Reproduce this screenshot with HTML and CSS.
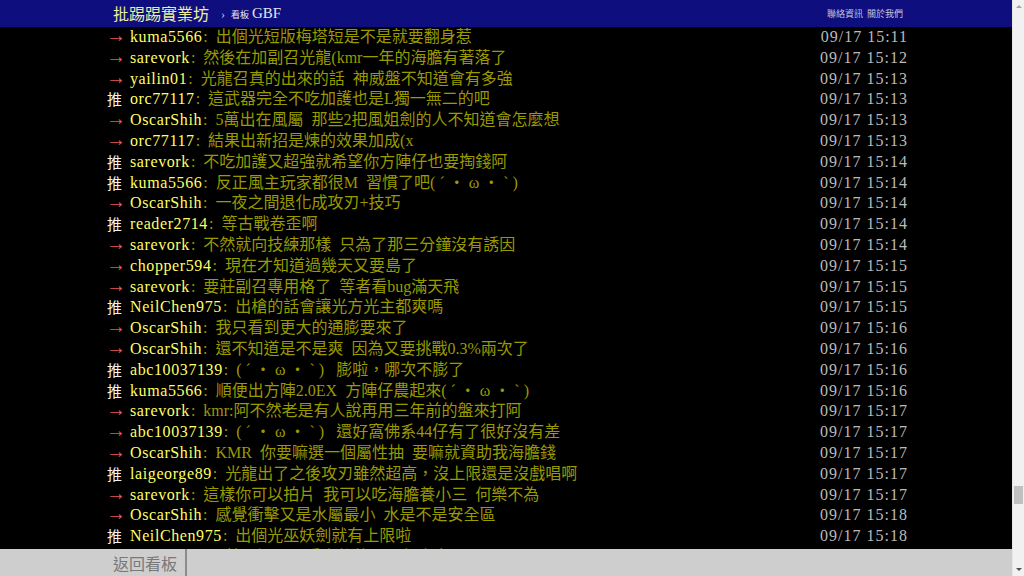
FILE: index.html
```html
<!DOCTYPE html>
<html lang="zh-Hant">
    <head>
        <meta charset="UTF-8">
        <meta name="viewport" content="width=device-width, initial-scale=1.0">
        <title>[閒聊] 光龍召 - 看板 GBF - 批踢踢實業坊</title>

        <!-- CSS -->
        <link rel="stylesheet" href="styles.css">
    </head>
    <body>
        <div class="window">
            <div class="page">
                <header class="topbar">
                    <div class="topbar-inner">
                        <a href="#" class="logo">批踢踢實業坊</a>
                        <span class="sep">›</span>
                        <a href="#" class="board"><span class="board-label">看板</span> GBF</a>
                        <div class="topbar-links">
                            <a href="#">聯絡資訊</a>
                            <a href="#">關於我們</a>
                        </div>
                    </div>
                </header>

                <main class="main">
                    <div class="bbs-screen">
                        <div class="push"><span class="push-tag arrow">→</span><span class="push-userid">kuma5566</span><span class="push-content">: 出個光短版梅塔短是不是就要翻身惹</span><span class="push-ipdatetime">09/17 15:11</span></div>
                        <div class="push"><span class="push-tag arrow">→</span><span class="push-userid">sarevork</span><span class="push-content">: 然後在加副召光龍(kmr一年的海膽有著落了</span><span class="push-ipdatetime">09/17 15:12</span></div>
                        <div class="push"><span class="push-tag arrow">→</span><span class="push-userid">yailin01</span><span class="push-content">: 光龍召真的出來的話 神威盤不知道會有多強</span><span class="push-ipdatetime">09/17 15:13</span></div>
                        <div class="push"><span class="push-tag">推</span><span class="push-userid">orc77117</span><span class="push-content">: 這武器完全不吃加護也是L獨一無二的吧</span><span class="push-ipdatetime">09/17 15:13</span></div>
                        <div class="push"><span class="push-tag arrow">→</span><span class="push-userid">OscarShih</span><span class="push-content">: 5萬出在風屬 那些2把風姐劍的人不知道會怎麼想</span><span class="push-ipdatetime">09/17 15:13</span></div>
                        <div class="push"><span class="push-tag arrow">→</span><span class="push-userid">orc77117</span><span class="push-content">: 結果出新招是煉的效果加成(x</span><span class="push-ipdatetime">09/17 15:13</span></div>
                        <div class="push"><span class="push-tag">推</span><span class="push-userid">sarevork</span><span class="push-content">: 不吃加護又超強就希望你方陣仔也要掏錢阿</span><span class="push-ipdatetime">09/17 15:14</span></div>
                        <div class="push"><span class="push-tag">推</span><span class="push-userid">kuma5566</span><span class="push-content">: 反正風主玩家都很M 習慣了吧<span class="kao">(´・ω・`)</span></span><span class="push-ipdatetime">09/17 15:14</span></div>
                        <div class="push"><span class="push-tag arrow">→</span><span class="push-userid">OscarShih</span><span class="push-content">: 一夜之間退化成攻刃+技巧</span><span class="push-ipdatetime">09/17 15:14</span></div>
                        <div class="push"><span class="push-tag">推</span><span class="push-userid">reader2714</span><span class="push-content">: 等古戰卷歪啊</span><span class="push-ipdatetime">09/17 15:14</span></div>
                        <div class="push"><span class="push-tag arrow">→</span><span class="push-userid">sarevork</span><span class="push-content">: 不然就向技練那樣 只為了那三分鐘沒有誘因</span><span class="push-ipdatetime">09/17 15:14</span></div>
                        <div class="push"><span class="push-tag arrow">→</span><span class="push-userid">chopper594</span><span class="push-content">: 現在才知道過幾天又要島了</span><span class="push-ipdatetime">09/17 15:15</span></div>
                        <div class="push"><span class="push-tag arrow">→</span><span class="push-userid">sarevork</span><span class="push-content">: 要莊副召專用格了 等者看bug滿天飛</span><span class="push-ipdatetime">09/17 15:15</span></div>
                        <div class="push"><span class="push-tag">推</span><span class="push-userid">NeilChen975</span><span class="push-content">: 出槍的話會讓光方光主都爽嗎</span><span class="push-ipdatetime">09/17 15:15</span></div>
                        <div class="push"><span class="push-tag arrow">→</span><span class="push-userid">OscarShih</span><span class="push-content">: 我只看到更大的通膨要來了</span><span class="push-ipdatetime">09/17 15:16</span></div>
                        <div class="push"><span class="push-tag arrow">→</span><span class="push-userid">OscarShih</span><span class="push-content">: 還不知道是不是爽 因為又要挑戰0.3%兩次了</span><span class="push-ipdatetime">09/17 15:16</span></div>
                        <div class="push"><span class="push-tag">推</span><span class="push-userid">abc10037139</span><span class="push-content">: <span class="kao">(´・ω・`)</span> 膨啦，哪次不膨了</span><span class="push-ipdatetime">09/17 15:16</span></div>
                        <div class="push"><span class="push-tag">推</span><span class="push-userid">kuma5566</span><span class="push-content">: 順便出方陣2.0EX 方陣仔農起來<span class="kao">(´・ω・`)</span></span><span class="push-ipdatetime">09/17 15:16</span></div>
                        <div class="push"><span class="push-tag arrow">→</span><span class="push-userid">sarevork</span><span class="push-content">: kmr:阿不然老是有人說再用三年前的盤來打阿</span><span class="push-ipdatetime">09/17 15:17</span></div>
                        <div class="push"><span class="push-tag arrow">→</span><span class="push-userid">abc10037139</span><span class="push-content">: <span class="kao">(´・ω・`)</span> 還好窩佛系44仔有了很好沒有差</span><span class="push-ipdatetime">09/17 15:17</span></div>
                        <div class="push"><span class="push-tag arrow">→</span><span class="push-userid">OscarShih</span><span class="push-content">: KMR 你要嘛選一個屬性抽 要嘛就資助我海膽錢</span><span class="push-ipdatetime">09/17 15:17</span></div>
                        <div class="push"><span class="push-tag">推</span><span class="push-userid">laigeorge89</span><span class="push-content">: 光龍出了之後攻刃雖然超高，沒上限還是沒戲唱啊</span><span class="push-ipdatetime">09/17 15:17</span></div>
                        <div class="push"><span class="push-tag arrow">→</span><span class="push-userid">sarevork</span><span class="push-content">: 這樣你可以拍片 我可以吃海膽養小三 何樂不為</span><span class="push-ipdatetime">09/17 15:17</span></div>
                        <div class="push"><span class="push-tag arrow">→</span><span class="push-userid">OscarShih</span><span class="push-content">: 感覺衝擊又是水屬最小 水是不是安全區</span><span class="push-ipdatetime">09/17 15:18</span></div>
                        <div class="push"><span class="push-tag">推</span><span class="push-userid">NeilChen975</span><span class="push-content">: 出個光巫妖劍就有上限啦</span><span class="push-ipdatetime">09/17 15:18</span></div>
                        <div class="push"><span class="push-tag">推</span><span class="push-userid">laigeorge89</span><span class="push-content">: 結果還是要看之後的石頭怎麼出</span><span class="push-ipdatetime">09/17 15:18</span></div>
                    </div>
                </main>

                <nav class="action-bar">
                    <div class="action-inner">
                        <a href="#" class="btn-back">返回看板</a>
                    </div>
                </nav>
            </div>

            <!-- scrollbar -->
            <div class="scrollbar">
                <div class="sb-arrow sb-up"></div>
                <div class="sb-track">
                    <div class="sb-thumb"></div>
                </div>
                <div class="sb-arrow sb-down"></div>
            </div>
        </div>
    </body>
</html>
```

FILE: styles.css
```css
    /* base */
    *{
        margin: 0;
        padding: 0;
        box-sizing: border-box;
    }

    body{
        background: #000;
        font-family: "Liberation Serif", "Noto Sans CJK TC", serif;
        overflow: hidden;
    }

    a{
        text-decoration: none;
    }

    .window{
        display: flex;
        width: 1024px;
        height: 576px;
    }

    .page{
        display: flex;
        flex-direction: column;
        width: 1012px;
        height: 576px;
    }

    /* top bar */
    .topbar{
        background: #0e0e7e;
        height: 27px;
        flex-shrink: 0;
    }

    .topbar-inner{
        display: flex;
        align-items: center;
        width: 800px;
        height: 100%;
        margin: 0 auto;
        padding: 0 3px 1px 7px;
    }

    .logo{
        color: #eeeea0;
        font-family: "Noto Sans CJK TC", sans-serif;
        font-size: 16px;
        line-height: 1;
    }

    .sep{
        color: #c8c8dc;
        font-size: 12px;
        margin: 2px 6px 0 12px;
    }

    .board{
        color: #e6e6f0;
        font-size: 15px;
        display: flex;
        align-items: baseline;
    }

    .board-label{
        font-family: "Noto Sans CJK TC", sans-serif;
        font-size: 9px;
        margin-right: 3px;
    }

    .topbar-links{
        margin-left: auto;
        display: flex;
        gap: 4px;
        padding-top: 1px;
    }

    .topbar-links a{
        color: #c4c4dc;
        font-family: "Noto Sans CJK TC", sans-serif;
        font-size: 9px;
    }

    /* comments */
    .main{
        flex: 1;
        overflow: hidden;
    }

    .bbs-screen{
        width: 800px;
        margin: 0 auto;
        font-size: 16px;
        line-height: 20.8px;
    }

    .push{
        display: flex;
        white-space: nowrap;
    }

    .push-tag{
        display: inline-block;
        width: 24px;
        color: #f4f4f4;
        font-family: "Noto Sans CJK TC", sans-serif;
        font-size: 15px;
        padding-left: 1px;
    }

    .push-tag.arrow{
        color: #e85a5a;
        font-family: "Liberation Serif", serif;
        font-size: 20px;
        line-height: 16px;
        padding-left: 0;
    }

    .push-userid{
        color: #ff6;
        letter-spacing: 0.6px;
    }

    .push-content{
        color: #990;
        margin-left: 1px;
        word-spacing: 4px;
    }

    .kao{
        letter-spacing: 4px;
    }

    .push-ipdatetime{
        margin-left: auto;
        color: #bbb;
        letter-spacing: 1px;
        margin-right: -2px;
    }

    /* bottom bar */
    .action-bar{
        height: 27px;
        flex-shrink: 0;
        background: #cecece;
    }

    .action-inner{
        display: flex;
        width: 800px;
        height: 100%;
        margin: 0 auto;
    }

    .btn-back{
        display: flex;
        align-items: center;
        padding: 0 8px 0 7px;
        border-right: 2px solid #8c8c8c;
        color: #787878;
        font-family: "Noto Sans CJK TC", sans-serif;
        font-size: 16px;
    }

    /* scrollbar */
    .scrollbar{
        width: 12px;
        height: 576px;
        display: flex;
        flex-direction: column;
        background: #f1f1f1;
        border-left: 1px solid #e6e6e6;
    }

    .sb-arrow{
        height: 13px;
        display: flex;
        justify-content: center;
        align-items: center;
    }

    .sb-up::after, .sb-down::after{
        content: "";
        border-left: 3px solid transparent;
        border-right: 3px solid transparent;
    }

    .sb-up::after{
        border-bottom: 3px solid #a3a3a3;
    }

    .sb-down::after{
        border-top: 3px solid #505050;
    }

    .sb-track{
        flex: 1;
        padding: 473px 1px 0 1px;
    }

    .sb-thumb{
        height: 18px;
        background: #c1c1c1;
    }
```
